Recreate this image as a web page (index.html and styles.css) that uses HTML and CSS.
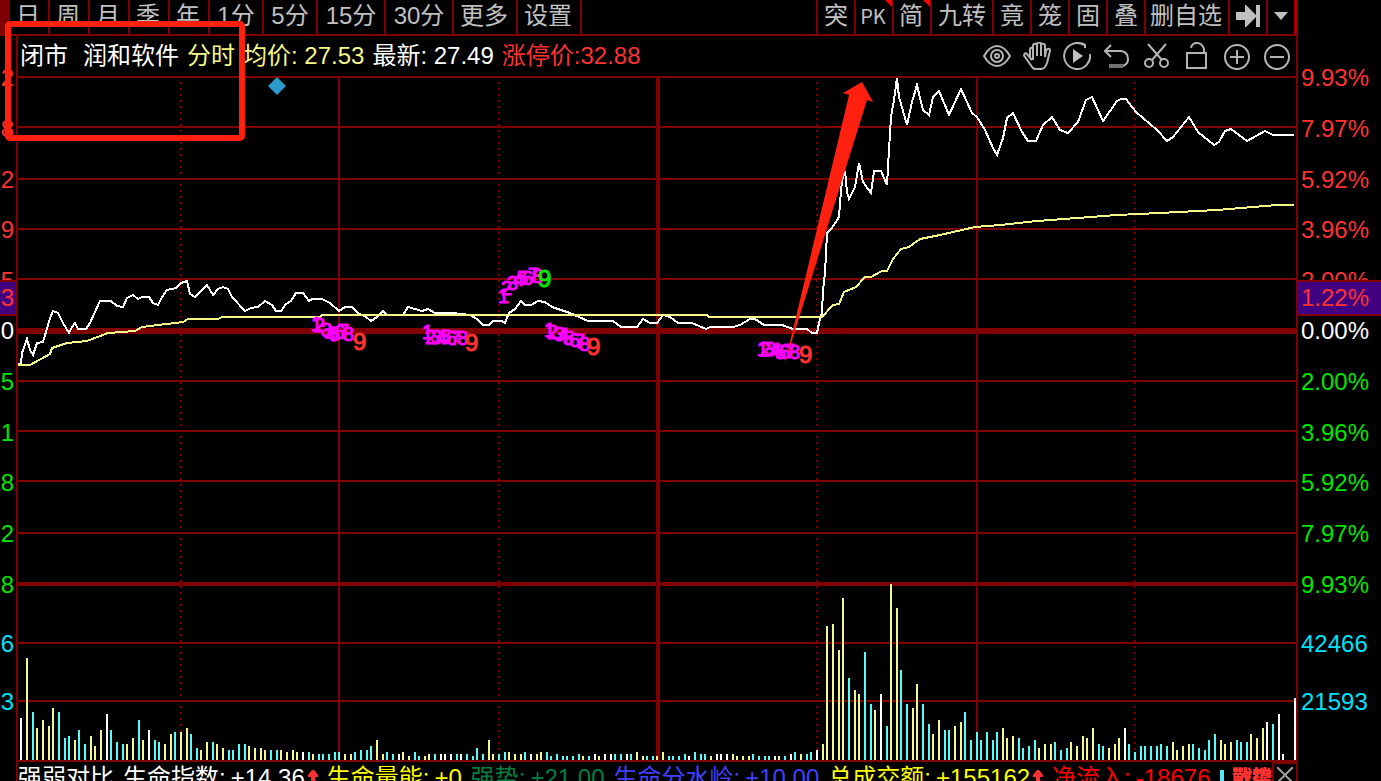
FILE: index.html
```html
<!DOCTYPE html>
<html lang="zh-CN">
<head>
<meta charset="utf-8">
<title>润和软件 分时</title>
<link rel="stylesheet" href="styles.css">
</head>
<body>
<div class="app">
  <nav class="toolbar">
    <div class="toolbar-edge"></div>
    <button class="tool tool-period">日</button>
    <button class="tool tool-period">周</button>
    <button class="tool tool-period">月</button>
    <button class="tool tool-period">季</button>
    <button class="tool tool-period">年</button>
    <button class="tool tool-minute">1分</button>
    <button class="tool tool-minute">5分</button>
    <button class="tool tool-minutes">15分</button>
    <button class="tool tool-minutes">30分</button>
    <button class="tool tool-word">更多</button>
    <button class="tool tool-word">设置</button>
    <div class="toolbar-space"></div>
    <button class="tool">突</button>
    <button class="tool tool-new"><span class="narrow">PK</span></button>
    <button class="tool tool-new">简</button>
    <button class="tool">九转</button>
    <button class="tool">竟</button>
    <button class="tool">笼</button>
    <button class="tool">固</button>
    <button class="tool">叠</button>
    <button class="tool tool-tight">删自选</button>
    <button class="tool" aria-label="跳到末尾"><svg class="glyph" viewBox="0 0 24 22"><path d="M0 7H9V0H10L20 10V0H24V22H20V12L10 22H9V15H0Z"/></svg></button>
    <button class="tool tool-last" aria-label="展开"><svg class="caret" viewBox="0 0 14 8"><path d="M0 0H14L7 8Z"/></svg></button>
  </nav>

  <div class="workspace">
    <div class="axis axis-left">
      <ul class="scale price-scale">
        <li class="up">2</li><li class="up">8</li><li class="up">2</li><li class="up">9</li><li class="up">5</li>
        <li class="flat">0</li>
        <li class="down">5</li><li class="down">1</li><li class="down">8</li><li class="down">2</li><li class="down">8</li>
      </ul>
      <ul class="scale volume-scale"><li>6</li><li>3</li></ul>
      <div class="current">3</div>
    </div>

    <main class="panel">
      <header class="quote">
        <span class="market">闭市</span>
        <span class="name">润和软件</span>
        <span class="average">分时</span>
        <span class="average">均价: 27.53</span>
        <span>最新: 27.49</span>
        <span class="limit">涨停价:32.88</span>
        <div class="actions">
          <button class="action" aria-label="显示"><svg viewBox="0 0 28 28"><path d="M1 14C5 7 10 4 14 4S23 7 27 14C23 21 18 24 14 24S5 21 1 14Z"/><circle cx="14" cy="14" r="6"/><circle cx="14" cy="14" r="2"/></svg></button>
          <button class="action" aria-label="拖动"><svg viewBox="0 0 28 28"><path d="M9 18L4 12C2 10 0 13 2 15L9 25Q10 27 13 27H18Q22 27 24 21L27 9C27 6 24 6 23 9L22 15V4C22 1 18 1 18 4V14V2C18 0 14 0 14 2V14V4C14 1 10 1 10 4V18M10 8C10 5 7 5 7 8V15"/></svg></button>
          <button class="action" aria-label="播放"><svg viewBox="0 0 28 28"><path d="M21 3A13 13 0 1 0 27 12M15 1Q20 1 22 3V6"/><path class="solid" d="M10 7L20 14L10 21Z"/></svg></button>
          <button class="action" aria-label="撤销"><svg viewBox="0 0 28 28"><path d="M8 3L2 9L8 15M2 9H18Q25 10 25 17Q25 22 20 24"/><path class="dim" d="M6 24H20"/></svg></button>
          <button class="action" aria-label="剪切"><svg viewBox="0 0 28 28"><path d="M5 2L19 18M23 2L9 18"/><circle cx="6" cy="21" r="4"/><circle cx="21" cy="21" r="4"/></svg></button>
          <button class="action" aria-label="解锁"><svg viewBox="0 0 28 28"><path d="M4 11H23V26H4ZM8 6Q9 1 14 1T21 7V11"/></svg></button>
          <button class="action" aria-label="放大"><svg viewBox="0 0 28 28"><circle cx="14" cy="15" r="12"/><path d="M7 15H21M14 8V22"/></svg></button>
          <button class="action" aria-label="缩小"><svg viewBox="0 0 28 28"><circle cx="14" cy="15" r="12"/><path d="M7 15H21"/></svg></button>
        </div>
      </header>

      <svg class="chart" viewBox="18 76 1278 686" preserveAspectRatio="none" role="img" aria-label="分时走势与成交量">
        <path class="grid" d="M18 77H1296M18 127H1296M18 179H1296M18 229H1296M18 279H1296M18 381H1296M18 431H1296M18 481H1296M18 533H1296M18 643H1296M18 701H1296M18 761H1296M339 78V760M977 78V760"/>
        <path class="grid grid-bold" d="M18 584H1296M658 78V760"/>
        <path class="grid grid-zero" d="M18 331H1296"/>
        <path class="grid grid-dotted" d="M181 82V760M499 82V760M817 82V760M1135 82V760"/>
        <path id="bars-rise" class="bars rise"/>
        <path id="bars-fall" class="bars fall"/>
        <path id="bars-even" class="bars even"/>
        <path class="diamond" d="M277 77L286 86L277 95L268 86Z"/>
        <polyline class="line price" points="18,365 21,363 22,353 27,339 30,350 33,355 37,343 43,342 46,332 50,318 53,311 58,313 63,323 69,333 72,327 75,323 78,329 86,329 90,323 95,312 100,301 111,301 117,306 123,307 127,298 133,295 138,299 142,297 149,297 153,303 158,305 162,297 167,290 176,288 181,283 187,281 190,294 195,297 200,292 207,285 213,295 218,289 223,287 228,289 232,297 245,311 251,308 258,307 265,301 272,305 276,311 281,311 286,304 291,301 296,293 303,293 309,301 312,299 322,299 330,303 339,311 345,307 352,307 358,313 366,317 371,321 377,317 383,311 387,315 403,315 408,307 422,311 428,309 435,313 453,313 470,315 477,319 483,325 489,325 493,321 502,321 505,323 509,313 515,309 521,301 525,305 531,305 538,301 545,302 552,307 570,313 588,321 613,321 621,327 637,327 643,319 650,323 657,323 663,315 670,317 678,323 692,323 706,329 710,327 733,327 740,325 750,319 755,319 764,325 782,325 793,329 807,329 812,333 817,333 819,323 822,313 823,290 825,273 827,233 832,228 839,217 840,203 842,180 845,171 847,192 849,199 855,187 859,163 863,182 871,193 874,171 881,171 887,185 889,150 891,117 894,100 897,78 899,97 907,125 912,102 917,85 920,98 923,110 929,115 933,97 939,91 949,115 961,89 972,113 977,117 985,130 993,148 997,155 1003,138 1007,118 1013,113 1022,132 1028,141 1036,141 1043,125 1052,117 1060,130 1068,133 1078,122 1086,100 1092,97 1103,121 1117,101 1121,99 1126,99 1136,112 1157,130 1167,141 1173,137 1189,117 1198,132 1214,145 1219,142 1225,131 1231,129 1247,141 1265,131 1273,135 1294,135"/>
        <polyline class="line mean" points="18,365 30,365 50,354 52,348 67,343 87,341 108,333 135,331 142,327 183,322 188,319 218,319 222,317 320,317 322,315 707,315 709,317 822,317 833,305 839,304 844,292 856,287 865,277 871,277 882,271 887,271 893,259 901,249 909,247 920,239 940,235 975,227 1000,225 1037,221 1117,215 1160,213 1217,210 1277,205 1294,205"/>
        <g class="count">
          <text x="311 314 321 325 329 334 338 343" y="331 332 337 341 341 339 338 341">12345678</text>
          <text x="422 425 431 436 440 446 450 457" y="339 344 344 344 344 345 345 345">12345678</text>
          <text x="498 501 507 513 517 522 528 532" y="303 295 290 286 285 285 282 283">12345678</text>
          <text x="544 547 554 558 563 569 574 579" y="337 339 341 342 345 347 348 351">12345678</text>
          <text x="757 760 765 770 775 779 784 789" y="356 356 356 357 359 359 358 359">12345678</text>
        </g>
        <g class="nine">
          <text x="353" y="350">9</text>
          <text x="465" y="351">9</text>
          <text class="nine-top" x="538" y="287">9</text>
          <text x="587" y="355">9</text>
          <text x="799" y="363">9</text>
        </g>
        <path class="arrow" d="M785 363L849 95L843 93L862 82L873 102L867 100Z"/>
      </svg>

      <footer class="status">
        <span>强弱对比</span>
        <span>生命指数:<b>+14.36</b></span>
        <svg class="rise-mark" viewBox="0 0 10 16"><path d="M3 16V7H0V5L4 0H6L10 5V7H7V16Z"/></svg>
        <span class="energy">生命量能:<b>+0</b></span>
        <span class="strength">强势:<b>+21.00</b></span>
        <span class="divide">生命分水岭:<b>+10.00</b></span>
        <span class="energy">总成交额:<b>+155162</b></span>
        <svg class="rise-mark" viewBox="0 0 10 16"><path d="M3 16V7H0V5L4 0H6L10 5V7H7V16Z"/></svg>
        <span class="inflow">净流入:<b>-18676</b></span>
        <div class="status-end">
          <i class="tick"></i>
          <span class="overlap">散撑<span>戰势</span></span>
          <button class="close" aria-label="关闭"><svg viewBox="0 0 16 16"><path d="M0 0L16 16M16 0L0 16"/></svg></button>
        </div>
      </footer>
    </main>

    <div class="axis axis-right">
      <ul class="scale price-scale">
        <li class="up">9.93%</li><li class="up">7.97%</li><li class="up">5.92%</li><li class="up">3.96%</li><li class="up">2.00%</li>
        <li class="flat">0.00%</li>
        <li class="down">2.00%</li><li class="down">3.96%</li><li class="down">5.92%</li><li class="down">7.97%</li><li class="down">9.93%</li>
      </ul>
      <ul class="scale volume-scale"><li>42466</li><li>21593</li></ul>
      <div class="current">1.22%</div>
    </div>
  </div>
  <div class="highlight"></div>
</div>
<script src="chart.js"></script>
</body>
</html>
```

FILE: styles.css
```css
* { box-sizing: border-box; }

:root {
  --rule: #800000;
  --up: #ff3232;
  --mark: #ff2010;
  --mean: #f4f888;
  --grey: #c0c0c0;
}

body {
  margin: 0;
  background: #000;
  color: #fff;
  font: 24px/32px "Liberation Sans", "Noto Sans CJK SC", sans-serif;
}

button {
  margin: 0;
  padding: 0;
  border: 0;
  background: none;
  color: inherit;
  font: inherit;
}

ul { margin: 0; padding: 0; list-style: none; }

.app {
  position: relative;
  display: grid;
  grid-template-rows: 36px 1fr;
  height: 100vh;
  overflow: hidden;
}

/* Period and tool buttons */
.toolbar {
  display: flex;
  margin-right: 83px;
  border-bottom: 2px solid var(--rule);
  color: var(--grey);
}
.toolbar-edge { width: 10px; margin-bottom: -2px; background: var(--rule); }
.toolbar-space { flex: 1; border-right: 2px solid var(--rule); }
.tool {
  position: relative;
  flex: none;
  padding: 0 6px 3px;
  border-right: 2px solid var(--rule);
  white-space: nowrap;
}
.tool-period, .tool-word { padding: 0 8px 3px 6px; }
.tool-minute { width: 54px; }
.tool-minutes { width: 68px; }
.tool-tight { padding: 0 6px 3px 4px; }
.tool-last { width: 30px; border-right: 4px solid #a00000; }
.tool-new { width: 38px; padding: 0 2px 3px 0; }
.tool-new::after {
  content: "";
  position: absolute;
  top: 0;
  right: 0;
  border-top: 7px solid #f00;
  border-left: 7px solid transparent;
}
.narrow { font-family: "Noto Sans CJK SC", sans-serif; font-size: 20px; }
.glyph { display: block; width: 24px; height: 22px; fill: var(--grey); }
.caret { display: block; width: 14px; height: 8px; margin: 0 auto; fill: var(--grey); }

.workspace {
  display: grid;
  grid-template-columns: 16px minmax(0, 1fr) 83px;
  min-height: 0;
}

/* Value scales */
.axis {
  position: relative;
  display: grid;
  grid-template-rows: 557fr 116fr;
  row-gap: 5px;
  min-height: 0;
  padding: 17px 0 50px;
}
.scale { display: grid; grid-auto-rows: 1fr; align-items: center; min-height: 0; }
.scale li { height: 32px; }
.axis-left { text-align: right; overflow: hidden; }
.axis-left li, .axis-left .current { padding-right: 2px; }
.axis-right li, .axis-right .current { padding-left: 3px; }
.up { color: var(--up); }
.down { color: #00e600; }
.volume-scale { color: #00e0f8; }
.current {
  position: absolute;
  top: 32.75%;
  left: 0;
  right: 0;
  border: solid var(--rule);
  border-width: 2px 0;
  background: #400080;
  color: var(--up);
}

/* Chart panel */
.panel {
  display: flex;
  flex-direction: column;
  min-height: 0;
  border: solid var(--rule);
  border-width: 0 2px;
}
.quote {
  flex: none;
  display: flex;
  align-items: center;
  gap: 8px;
  height: 40px;
  padding: 0 5px 0 2px;
  white-space: nowrap;
}
.market { margin-right: 7px; }
.average { color: var(--mean); }
.limit { color: var(--up); }
.actions { display: flex; gap: 12px; margin-left: auto; }
.action { width: 28px; height: 28px; }
.action svg {
  display: block;
  width: 28px;
  height: 28px;
  fill: none;
  stroke: #b4b4b4;
  stroke-width: 2;
}
.action .solid { fill: var(--grey); stroke: none; }
.action .dim { stroke: #707070; stroke-width: 4; }

.chart { flex: 1; display: block; width: 100%; min-height: 0; }
.grid { fill: none; stroke: var(--rule); stroke-width: 2; shape-rendering: crispEdges; }
.grid-bold { stroke-width: 4; }
.grid-zero { stroke-width: 6; }
.grid-dotted { stroke-dasharray: 2 4; }
.line { fill: none; stroke-width: 2; shape-rendering: crispEdges; }
.price { stroke: #fff; }
.mean { stroke: var(--mean); }
.bars { fill: none; stroke-width: 2; shape-rendering: crispEdges; }
.rise { stroke: var(--mean); }
.fall { stroke: #54fcfc; }
.even { stroke: #fff; }
.diamond { fill: #2a9ac8; }
.count { fill: #f0f; stroke: #f0f; stroke-width: 1; font-size: 20px; }
.nine { fill: var(--up); stroke: var(--up); stroke-width: 1; }
.nine-top { fill: #00e600; stroke: #00e600; }
.arrow { fill: var(--mark); }

/* Indicator strip */
.status {
  flex: none;
  display: flex;
  gap: 9px;
  height: 19px;
  overflow: hidden;
  white-space: nowrap;
}
.status b { padding-left: 5px; font-weight: 400; }
.rise-mark { width: 10px; height: 16px; margin: 8px 0 0 -6px; fill: var(--up); }
.energy { color: #ff0; }
.strength { color: #008040; }
.divide { color: #4040ff; }
.inflow { color: #f00; }
.status-end { display: flex; margin-left: auto; }
.tick { width: 4px; height: 16px; margin: 8px 8px 0 0; background: #54e8fc; }
.overlap { position: relative; color: var(--up); font-size: 20px; font-weight: 700; }
.overlap span { position: absolute; left: 0; top: 0; }
.close {
  width: 24px;
  height: 32px;
  border: solid var(--rule);
  border-width: 2px 0 0 2px;
}
.close svg { display: block; width: 16px; height: 16px; margin: -8px auto 0; fill: none; stroke: #a0a0a0; stroke-width: 2; }

.highlight {
  position: absolute;
  left: 5px;
  top: 21px;
  width: 240px;
  height: 120px;
  border: 6px solid var(--mark);
  border-radius: 5px;
  pointer-events: none;
}
```

FILE: chart.js
```js
// Volume bars: x, top of bar, and r (rise), f (fall) or e (even).
const volume = `21,718e 27,658r 33,712f 37,728r 43,720r 49,726r 53,708r 59,712f 65,738f 69,736f 75,740r 79,730f
85,744f 91,736r 95,746r 101,730r 107,714e 111,730f 117,742f 123,744f 127,744r 133,738r 139,720f 143,740r 149,730e
155,740f 159,742f 165,744r 171,734r 175,732f 181,732r 187,728r 191,734f 197,748f 201,750r 207,742r 213,742f 217,744r
223,748r 229,750f 233,750f 239,744f 245,744f 249,746r 255,748r 261,748r 265,750r 271,750f 277,750f 281,750r 287,752r
293,750r 297,752r 303,752e 309,752f 313,754r 319,754f 323,754f 329,754f 335,752f 339,752f 345,754r 351,754r 355,752f
361,750f 367,750f 371,746f 377,740r 383,754r 387,752f 393,754f 399,754e 403,752r 409,756r 415,752f 419,756f 425,756r
429,754r 435,754f 441,754e 445,754e 451,754e 457,754f 461,754e 467,754f 473,756f 477,748f 483,754f 489,740r 493,754r
499,754f 505,752f 509,752r 515,754r 521,754r 525,752f 531,754e 537,754r 541,752r 547,752f 551,756f 557,754f 563,756f
567,756f 573,756f 579,754f 583,756r 589,756f 595,754e 599,756r 605,754e 611,754e 615,754f 621,754f 627,754e 631,754f
637,752r 643,756r 647,756f 653,756f 657,756r 663,752r 669,756f 673,756f 679,756f 685,754f 689,756e 695,752f 701,754f
705,754f 711,756r 717,754e 721,754e 727,754e 733,754r 737,756r 743,756r 749,756r 753,754f 759,756f 765,756f 769,756f
775,756e 779,756r 785,756f 791,754e 795,752f 801,754r 807,754f 811,752f 817,750e 823,744r 827,626r 833,624r 839,650r
843,598r 849,678f 855,690r 859,694r 865,652f 871,704f 875,710r 881,694e 887,726f 891,584r 897,608r 901,670f 907,704f
913,708r 917,684r 923,704f 929,724f 933,734r 939,720r 945,730f 949,730f 955,726r 961,722r 965,712f 971,740f 977,732f
981,740f 987,732f 993,740f 997,732f 1003,728r 1007,738r 1013,736r 1019,738f 1023,748f 1029,746f 1035,740f 1039,748r
1045,744r 1051,744r 1055,742f 1061,750f 1067,748f 1071,742r 1077,746r 1083,736r 1087,738r 1093,728r 1099,744f
1103,746f 1109,748r 1115,744r 1119,738r 1125,728e 1129,744f 1135,752f 1141,746f 1145,746f 1151,746f 1157,746f
1161,744f 1167,746f 1173,742r 1177,750r 1183,746r 1189,744r 1193,744f 1199,748f 1205,750f 1209,740f 1215,734f
1221,740r 1225,744r 1231,742r 1237,740f 1241,742f 1247,742f 1251,734r 1257,738r 1263,728r 1267,722e 1273,724f
1279,714e 1283,754e 1295,698e`;

const paths = { r: "", f: "", e: "" };
for (const bar of volume.split(/\s+/)) {
  const [x, top] = bar.slice(0, -1).split(",");
  paths[bar.slice(-1)] += `M${x} ${top}V760`;
}
document.getElementById("bars-rise").setAttribute("d", paths.r);
document.getElementById("bars-fall").setAttribute("d", paths.f);
document.getElementById("bars-even").setAttribute("d", paths.e);
```
